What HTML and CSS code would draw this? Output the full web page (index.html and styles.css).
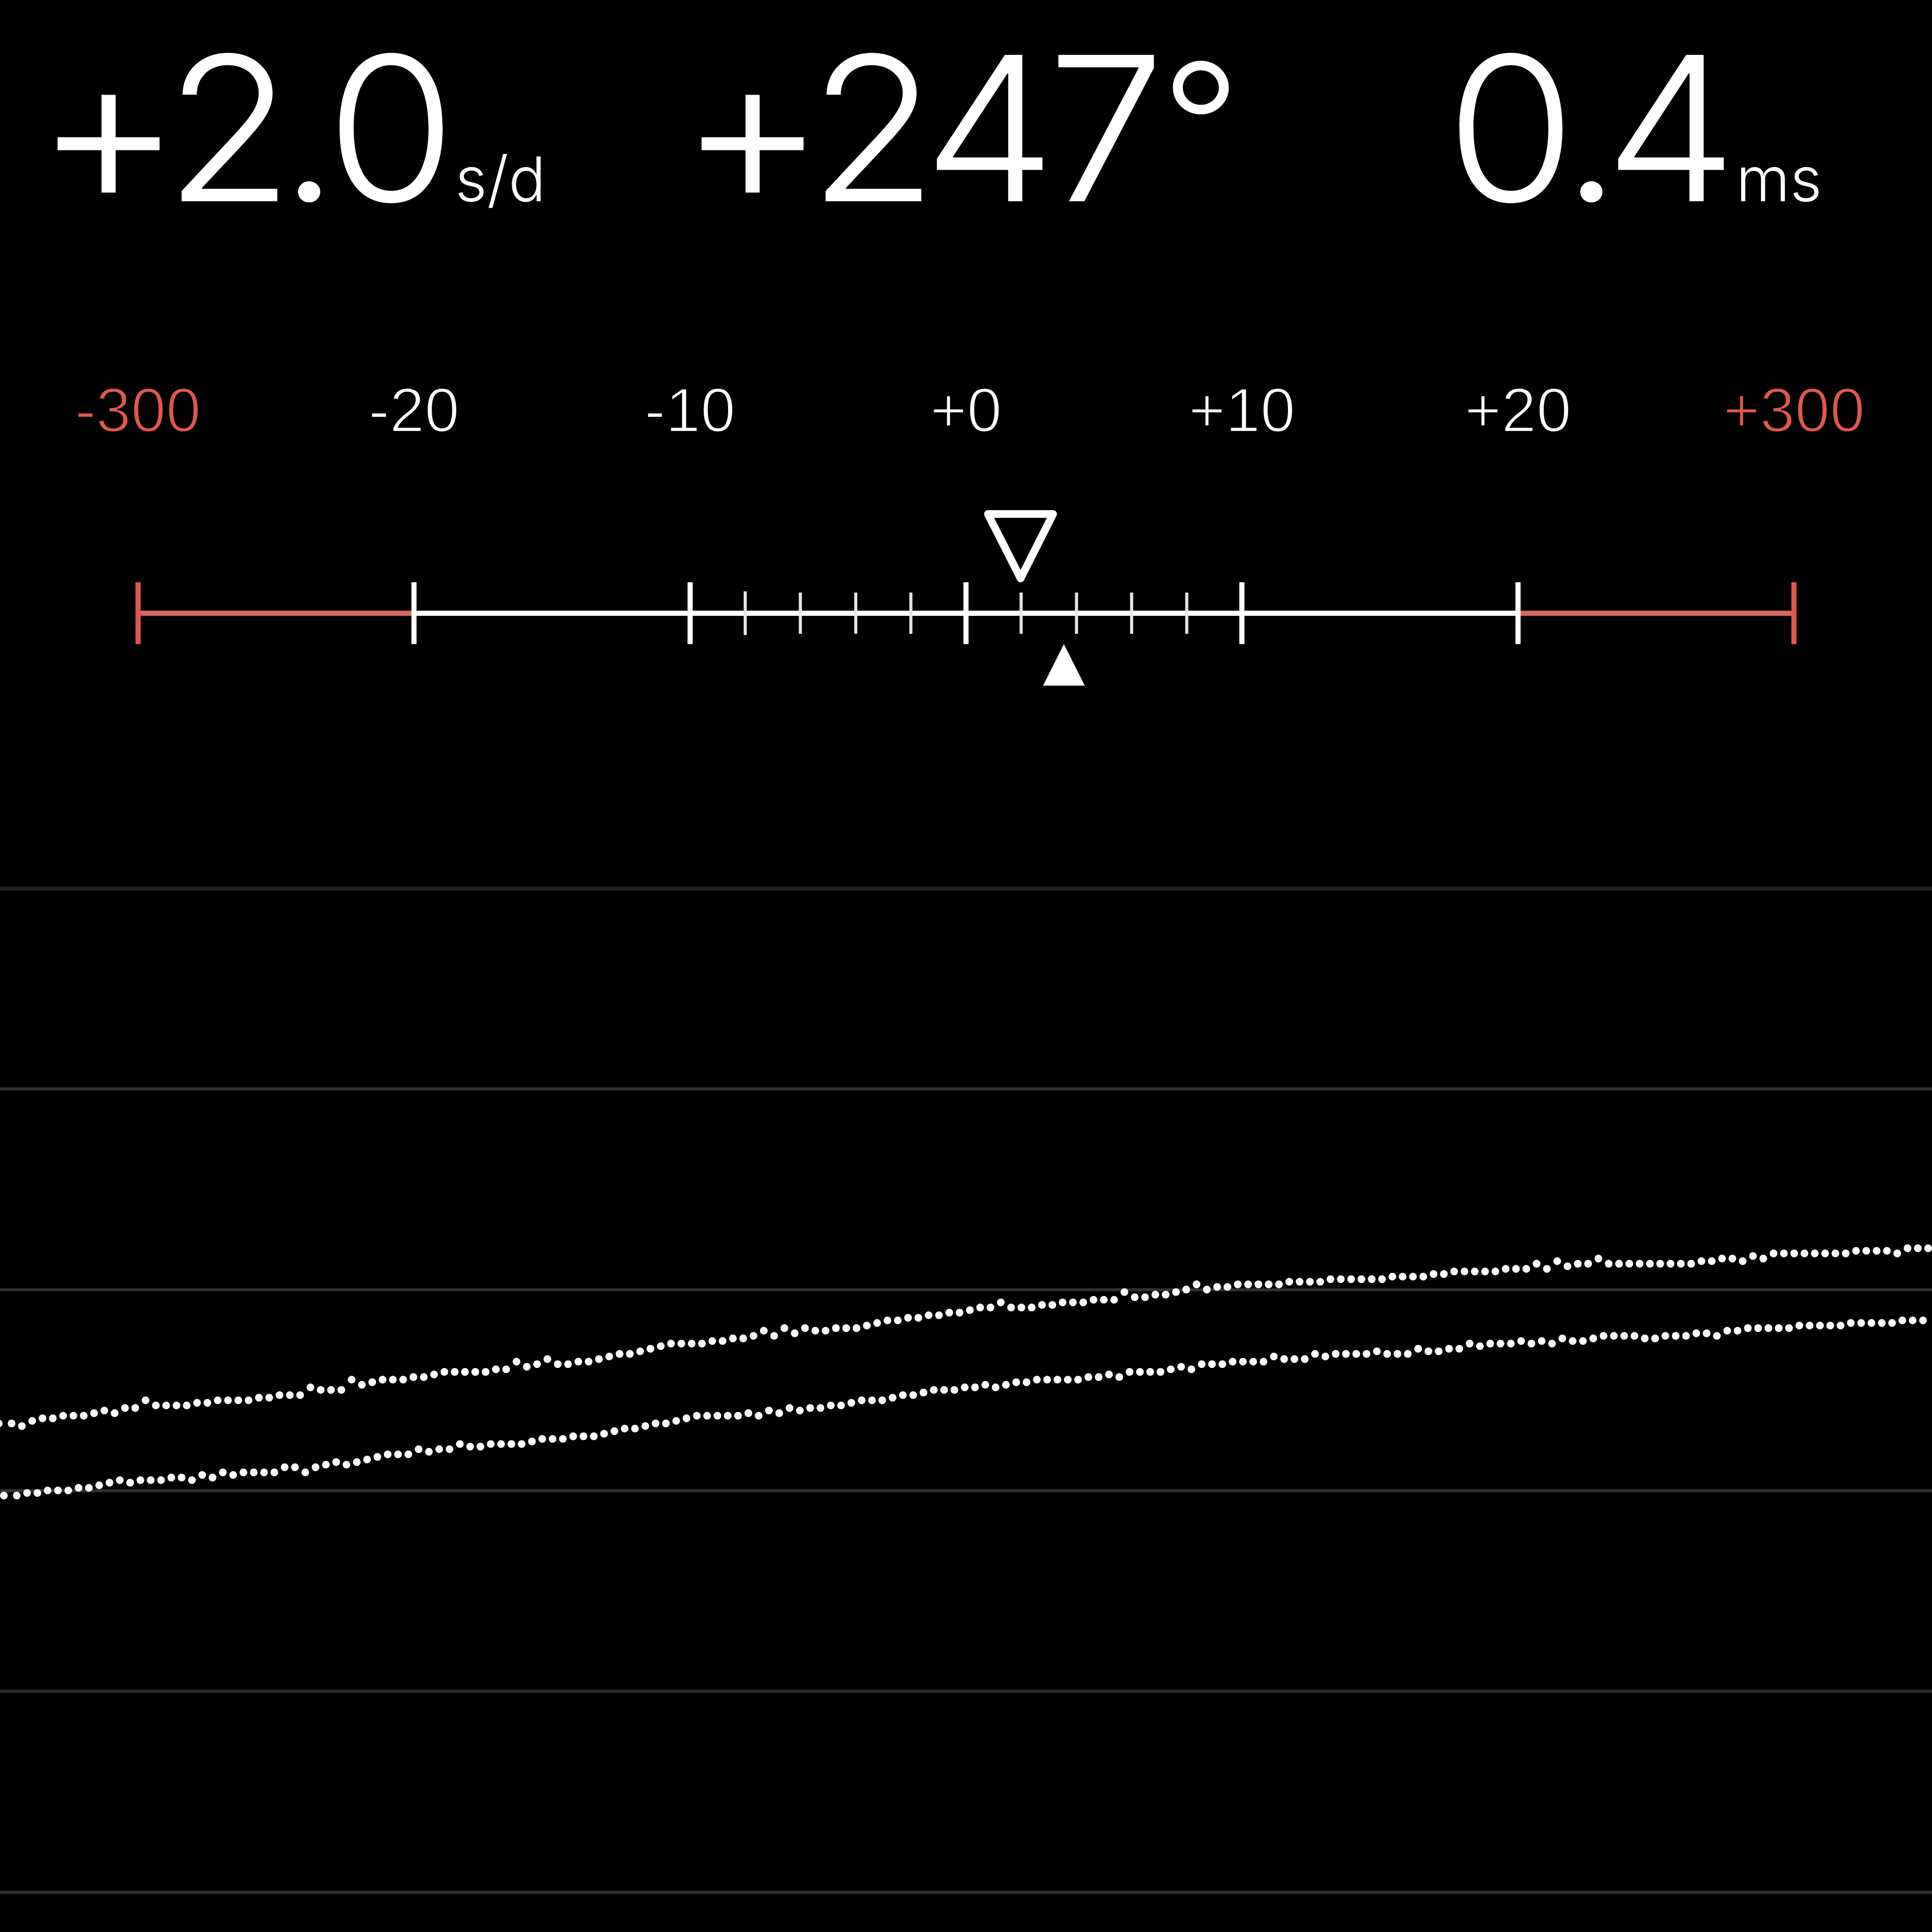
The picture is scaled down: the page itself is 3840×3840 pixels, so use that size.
FILE: index.html
```
<!DOCTYPE html>
<html lang="en">
<head>
    <meta charset="UTF-8">
    <meta name="viewport" content="width=device-width, initial-scale=1.0">
    <title>Timegrapher</title>
    <link rel="stylesheet" href="styles.css">
</head>
<body>
    <div class="readings">
        <div class="reading rate"><span class="num"><span class="sign">+</span><span class="k1">2</span><span class="k2">.</span>0</span><span class="unit">s/d</span></div>
        <div class="reading amplitude"><span class="num"><span class="sign">+</span><span class="k1">2</span><span class="k3">4</span><span class="k4">7</span><span class="deg">°</span></span></div>
        <div class="reading beat"><span class="num"><span class="k1">0</span><span class="k5">.</span>4</span><span class="unit">ms</span></div>
    </div>

    <div class="labels">
        <span class="red">-300</span>
        <span>-20</span>
        <span>-10</span>
        <span>+0</span>
        <span>+10</span>
        <span>+20</span>
        <span class="red">+300</span>
    </div>

    <svg class="gauge" viewBox="0 190 750 90">
        <path class="bar" d="M160.7 238H589.3"/>
        <path class="bar-red" d="M53.6 238H160.7M589.3 238H696.4"/>
        <path class="tick" d="M160.7 226V250M267.9 226V250M375 226V250M482.1 226V250M589.3 226V250"/>
        <path class="tick-red" d="M53.6 226V250M696.4 226V250"/>
        <path class="minor" d="M289.3 229.5V246.5M310.7 230V246M332.2 230V246M353.6 230V246M396.4 230V246M417.9 230V246M439.3 230V246M460.7 230V246"/>
        <path class="average" d="M383.5 199.5H408.8L396.2 224.5Z"/>
        <path class="current" d="M413 250L421.1 266.1H404.9Z"/>
    </svg>

    <svg class="chart" id="chart" viewBox="0 280 750 470">
        <g class="grid">
            <path class="first" d="M0 344.9H750"/>
            <path d="M0 422.6H750M0 500.6H750M0 578.6H750M0 656.5H750M0 734.5H750"/>
        </g>
    </svg>

    <script>
        // beat offsets, one value for each tick / tock
        const tick = [
            0,-1,1,2,2,3,3,3,4,5,4,6,6,9,7,7,7,7,8,8,9,9,9,9,10,10,11,11,11,14,13,13,13,17,15,16,17,17,17,18,18,19,20,20,20,20,
            20,21,21,24,22,23,25,23,23,24,24,25,26,27,27,28,29,30,31,31,31,31,32,32,33,33,34,36,34,37,35,37,36,36,37,37,37,38,39,40,40,41,41,42,42,43,43,
            44,45,45,47,45,45,45,46,46,47,47,47,48,48,48,51,49,49,50,50,51,52,54,52,53,53,54,54,54,54,54,55,55,55,55,56,56,56,56,56,56,57,57,57,57,58,58,
            59,59,59,59,59,60,60,60,62,60,63,61,62,62,64,62,62,62,62,62,62,62,62,62,63,63,64,64,63,65,64,66,66,66,66,66,66,66,66,67,67,67,67,66,68,68,68
        ];
        const tock = [
            0,1,1,2,2,2,3,3,4,5,6,5,6,6,6,7,7,6,8,7,9,8,9,9,9,9,11,11,9,11,12,13,12,13,14,15,16,16,16,18,17,18,18,20,19,19,
            20,20,20,20,21,22,22,22,23,23,23,24,25,26,26,27,28,28,29,30,31,31,31,31,31,32,31,33,32,34,33,34,34,35,35,36,37,37,37,38,39,39,40,41,41,41,42,
            42,43,42,43,44,44,45,45,45,45,45,46,46,47,46,48,48,48,48,49,50,49,51,51,51,52,52,52,52,54,53,53,53,55,54,55,55,55,55,56,55,55,55,57,56,56,57,
            57,59,58,59,59,59,60,59,60,59,61,60,60,61,62,62,62,62,61,61,62,62,62,63,63,62,64,64,65,65,65,65,65,66,66,66,66,66,67,67,67,67,67,68,68,68
        ];
        const chart = document.getElementById('chart');

        function dot(x, y) {
            const c = document.createElementNS('http://www.w3.org/2000/svg', 'circle');
            c.setAttribute('cx', x);
            c.setAttribute('cy', y);
            c.setAttribute('r', 1.5);
            chart.appendChild(c);
        }

        dot(-0.5, 552.5);
        tick.forEach((v, i) => dot(4.5 + i * 4, 552.5 - v));
        dot(1.5, 580.5);
        tock.forEach((v, i) => dot(6.5 + i * 4, 580.5 - v));
    </script>
</body>
</html>
```
FILE: styles.css
```
* {
    margin: 0;
    padding: 0;
    box-sizing: border-box;
}
body {
    width: 3840px;
    height: 3840px;
    background-color: #000;
    color: #fff;
    overflow: hidden;
    font-family: Inter, "Liberation Sans", sans-serif;
}
.readings {
    display: grid;
    grid-template-columns: 1280px 1525px 1fr;
    height: 740px;
    padding: 54px 0 0 69px;
}
.reading {
    font-size: 400px;
    font-weight: 300;
    line-height: 1;
    white-space: nowrap;
}
.num {
    display: inline-block;
    transform: scaleX(1.045);
    transform-origin: left;
}
.sign {
    font-size: 430px;
    line-height: 0;
    vertical-align: -8px;
    letter-spacing: -34px;
}
.deg {
    font-size: 335px;
    line-height: 0;
    vertical-align: 33px;
}
/* digit spacing */
.k1 {
    letter-spacing: -27px;
}
.k2 {
    letter-spacing: -24px;
}
.k3 {
    letter-spacing: -16px;
}
.k4 {
    letter-spacing: -8px;
}
.k5 {
    letter-spacing: -31px;
}
.unit {
    font-size: 123px;
}
.rate .unit {
    margin-left: 34px;
}
.beat .unit {
    margin-left: 23px;
}
.labels {
    display: grid;
    grid-template-columns: repeat(7, 1fr);
    height: 233px;
    text-align: center;
    font-family: "Liberation Sans", Arial, sans-serif;
    font-size: 125px;
    line-height: 149px;
    -webkit-text-stroke: 3px #000;
}
.red {
    color: #e2574c;
}
.gauge {
    display: block;
    width: 3840px;
    height: 460.8px;
    fill: none;
    stroke: #fff;
    stroke-width: 2;
}
.gauge .bar-red {
    stroke: #d9665d;
}
.gauge .tick-red {
    stroke: #e0574d;
}
.gauge .minor {
    stroke-width: 1.2;
    stroke: #e6e6e6;
}
.gauge .average {
    stroke-width: 3;
    stroke-linejoin: round;
}
.gauge .current {
    fill: #fff;
    stroke: none;
}
.chart {
    display: block;
    width: 3840px;
    height: 2406.4px;
    fill: #fff;
}
.grid {
    stroke: #303030;
    stroke-width: 1.2;
}
.grid .first {
    stroke: #222;
    stroke-width: 1.6;
}
```
